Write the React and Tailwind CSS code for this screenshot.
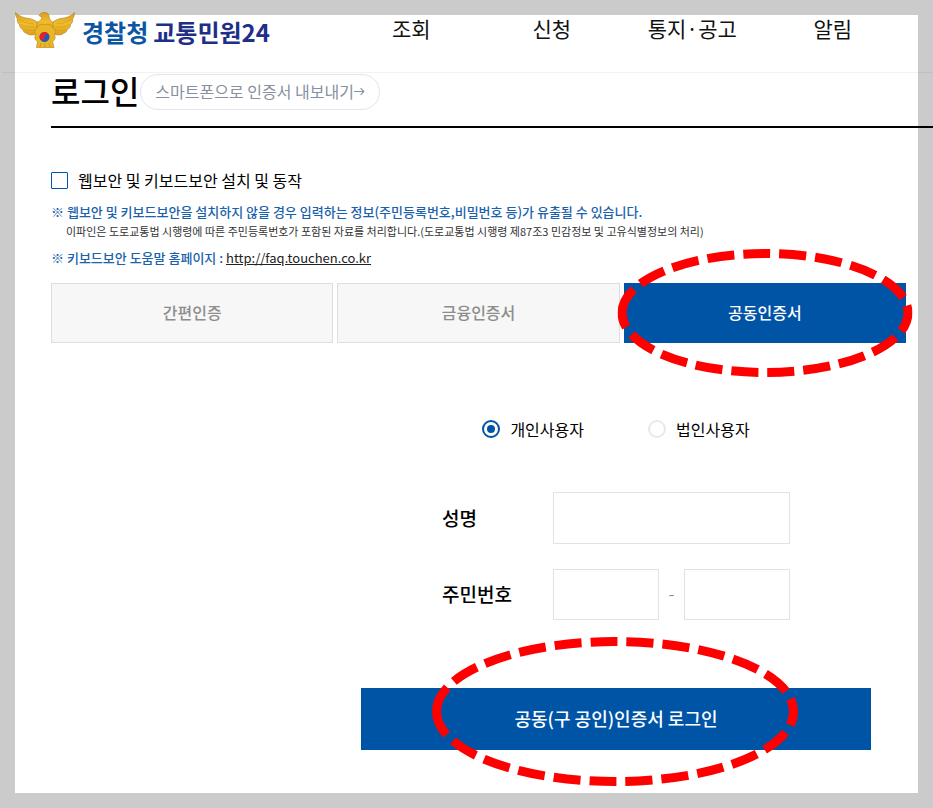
import React, { useState } from 'react';
import clsx from 'clsx';

const MENUS = ['조회', '신청', '통지·공고', '알림'];

const TABS = [
    { id: 'simple', label: '간편인증' },
    { id: 'finance', label: '금융인증서' },
    { id: 'joint', label: '공동인증서' },
];

const USER_TYPES = [
    { id: 'personal', label: '개인사용자' },
    { id: 'corporate', label: '법인사용자' },
];

const Emblem = () => (
    <svg viewBox="0 0 60 38" className="h-[38px] w-[60px] shrink-0" aria-hidden="true">
        <defs>
            <linearGradient id="gold" x1="0" y1="0" x2="0" y2="1">
                <stop offset="0" stopColor="#d99c22" />
                <stop offset="0.5" stopColor="#f0bd2c" />
                <stop offset="1" stopColor="#dba01c" />
            </linearGradient>
        </defs>
        {/* wings */}
        <path
            d="M0.5 1.5 C4 5.5 9 7 14 7.5 C18 8 20 10 23 11.5 L23 22 C18 25 13 24 11 22 C9 21.5 8 20 8 18.5 C5.500 17.500 4.500 15.500 4.500 13.500 C2.500 12 2 9.500 2.500 8 C1 6 0.500 4 0.500 1.500 Z"
            fill="url(#gold)" stroke="#b98225" strokeWidth="0.7"
        />
        <path
            d="M59.500 1.500 C56 5.500 51 7 46 7.500 C42 8 40 10 37 11.500 L37 22 C42 25 47 24 49 22 C51 21.500 52 20 52 18.500 C54.500 17.500 55.500 15.500 55.500 13.500 C57.500 12 58 9.500 57.500 8 C59 6 59.500 4 59.500 1.500 Z"
            fill="url(#gold)" stroke="#b98225" strokeWidth="0.7"
        />
        <path
            d="M3 8 Q10 13 19 13 M5 13.500 Q12 17 20 16 M8.500 18.500 Q14 20.500 21 19 M57 8 Q50 13 41 13 M55 13.500 Q48 17 40 16 M51.500 18.500 Q46 20.500 39 19"
            fill="none" stroke="#d39a22" strokeWidth="0.6"
        />
        {/* head and shoulders */}
        <path
            d="M24 4.500 C25 2.500 27 1.500 29.500 1.500 C32.500 1.500 34 3 34 5.500 C34.500 8.500 36 10.500 38 11.500 L38 20 L22 20 L22 11.500 C25 10.500 26.500 8.500 27 6.500 Q25.500 5.500 24 4.500 Z"
            fill="url(#gold)" stroke="#b98225" strokeWidth="0.7"
        />
        {/* flower badge */}
        <path
            d="M30 14 C33 12.500 36 13.500 37.500 16.500 C40.500 17.500 41 21 39.500 24 C41 27 39.500 29.500 37.500 30.500 L39 36.500 L21.500 36.500 L22.500 30.500 C20.500 29.500 19 27 20.500 24 C19 21 19.500 17.500 22.500 16.500 C24 13.500 27 12.500 30 14 Z"
            fill="#e9b62a" stroke="#c48a1c" strokeWidth="0.7"
        />
        <path d="M26 32 L25 36 M30 32.500 V36 M34 32 L35 36" stroke="#c48a1c" strokeWidth="0.7" />
        {/* taegeuk */}
        <g transform="rotate(-8 29.500 26)">
            <circle cx="29.500" cy="26" r="5" fill="#1f5bb5" />
            <path d="M24.500 26 A5 5 0 0 1 34.500 26 A2.500 2.500 0 0 0 29.500 26 A2.500 2.500 0 0 1 24.500 26 Z" fill="#e8202c" />
        </g>
    </svg>
);

const Header = () => (
    <header className="-ml-[13px] -mr-[15px] flex h-[58px] items-start border-b border-black/5 pl-[13px] pr-[30px]">
        <a href="#" className="-mt-1 flex shrink-0 items-start">
            <Emblem />
            <span className="ml-[7px] mt-[3px] flex items-baseline gap-[5px] text-2xl font-bold leading-9">
                <span className="text-[#0b56a4]">경찰청</span>
                <span className="text-[#1f2f87]">교통민원24</span>
            </span>
        </a>
        <nav className="ml-auto grid w-[562px] shrink-0 grid-cols-4 text-center text-[21px] leading-[26px] text-[#111]">
            {MENUS.map((menu) => (
                <a key={menu} href="#">{menu}</a>
            ))}
        </nav>
    </header>
);

const App = () => {
    const [tab, setTab] = useState('joint');
    const [userType, setUserType] = useState('personal');

    return (
        <div className="min-h-screen overflow-x-hidden bg-[#cbcbcb] p-[15px] font-['Noto_Sans_CJK_KR',sans-serif] text-black">
            <div className="bg-white pb-[43px]">
                <Header />

                <main className="pl-9 pr-3">
                    <div className="-mr-[27px] flex h-[55px] items-start gap-px border-b-2 border-black">
                        <h1 className="text-[32px] font-medium leading-[34px]">로그인</h1>
                        <button
                            type="button"
                            className="mt-px flex h-9 items-center rounded-full border border-[#e2e4f0] px-[14px] pb-[2px] text-base text-[#8790a0]"
                        >
                            스마트폰으로 인증서 내보내기
                            <svg viewBox="0 0 10 10" className="size-[11px]" fill="none" stroke="currentColor" aria-hidden="true">
                                <path d="M0 5 H9 M6 2 L9 5 L6 8" />
                            </svg>
                        </button>
                    </div>

                    <label className="mt-10 flex w-fit items-center gap-[10px] text-base leading-6">
                        <input
                            type="checkbox"
                            className="size-[17px] appearance-none rounded-[1px] border border-[#0054a6] checked:bg-[#0054a6]"
                        />
                        웹보안 및 키보드보안 설치 및 동작
                    </label>

                    <p className="mt-[10px] text-[13px] font-medium leading-5 text-[#1a62ac]">
                        ※ 웹보안 및 키보드보안을 설치하지 않을 경우 입력하는 정보(주민등록번호,비밀번호 등)가 유출될 수 있습니다.
                    </p>
                    <p className="pl-[15px] text-[11px] leading-[18px] text-[#333]">
                        이파인은 도로교통법 시행령에 따른 주민등록번호가 포함된 자료를 처리합니다.(도로교통법 시행령 제87조3 민감정보 및 고유식별정보의 처리)
                    </p>
                    <p className="mt-2 text-[13px] font-medium leading-5 text-[#1a62ac]">
                        ※ 키보드보안 도움말 홈페이지 :{' '}
                        <a href="http://faq.touchen.co.kr" className="font-normal text-[#222] underline">http://faq.touchen.co.kr</a>
                    </p>

                    <div role="tablist" className="mt-[15px] grid grid-cols-3 gap-1">
                        {TABS.map(({ id, label }) => (
                            <div key={id} className="relative">
                                <button
                                    type="button"
                                    role="tab"
                                    aria-selected={tab === id}
                                    onClick={() => setTab(id)}
                                    className={clsx(
                                        'h-[60px] w-full border pb-[2px] text-base font-medium',
                                        tab === id
                                            ? 'border-[#0054a6] bg-[#0054a6] text-white'
                                            : 'border-[#dedede] bg-[#f7f7f7] text-[#8d8d8d]'
                                    )}
                                >
                                    {label}
                                </button>
                                {id === 'joint' && (
                                    <svg
                                        viewBox="0 0 295 128"
                                        className="pointer-events-none absolute left-1/2 top-1/2 h-32 w-[295px] -translate-x-1/2 -translate-y-1/2"
                                        fill="none" stroke="#f00" strokeWidth="9" strokeDasharray="27 9" aria-hidden="true"
                                    >
                                        <path d="M4.500 64 A143 59.500 0 0 1 290.500 64 A143 59.500 0 0 1 4.500 64" />
                                    </svg>
                                )}
                            </div>
                        ))}
                    </div>

                    <form
                        className="ml-auto mr-[35px] mt-[74px] flex w-full max-w-[510px] flex-col items-center"
                        onSubmit={(e) => e.preventDefault()}
                    >
                        <div className="flex gap-16">
                            {USER_TYPES.map(({ id, label }) => (
                                <label key={id} className="flex items-center gap-[10px] text-base leading-6">
                                    <input
                                        type="radio"
                                        name="userType"
                                        checked={userType === id}
                                        onChange={() => setUserType(id)}
                                        className="size-[18px] appearance-none rounded-full border-2 border-[#e8e8e8] bg-clip-content p-[3px] checked:border-[#0054a6] checked:bg-[#0054a6]"
                                    />
                                    {label}
                                </label>
                            ))}
                        </div>

                        <div className="mt-[51px] grid grid-cols-[111px_237px] items-center gap-y-[25px] text-[19px]">
                            <label htmlFor="userName" className="font-medium">성명</label>
                            <input id="userName" type="text" className="h-[52px] w-full border border-[#e2e2e2] px-3 text-base" />

                            <label htmlFor="regFront" className="font-medium">주민번호</label>
                            <div className="flex items-center">
                                <input id="regFront" type="text" maxLength={6} className="h-[51px] w-[106px] border border-[#e2e2e2] px-3 text-base" />
                                <span className="flex-1 pb-1 text-center text-base text-[#888]">-</span>
                                <input
                                    type="password"
                                    maxLength={7}
                                    aria-label="주민번호 뒷자리"
                                    className="h-[51px] w-[106px] border border-[#e2e2e2] px-3 text-base"
                                />
                            </div>
                        </div>

                        <div className="relative mt-[68px] w-full">
                            <button type="submit" className="h-[62px] w-full bg-[#0054a6] pb-[3px] text-lg font-medium text-white">
                                공동(구 공인)인증서 로그인
                            </button>
                            <svg
                                viewBox="0 0 366 149"
                                className="pointer-events-none absolute -top-[51px] left-[71px] h-[149px] w-[366px]"
                                fill="none" stroke="#f00" strokeWidth="9" strokeDasharray="27 9" aria-hidden="true"
                            >
                                <path d="M4.500 74.500 A178.500 70 0 0 1 361.500 74.500 A178.500 70 0 0 1 4.500 74.500" />
                            </svg>
                        </div>
                    </form>
                </main>
            </div>
        </div>
    );
};

export default App;
